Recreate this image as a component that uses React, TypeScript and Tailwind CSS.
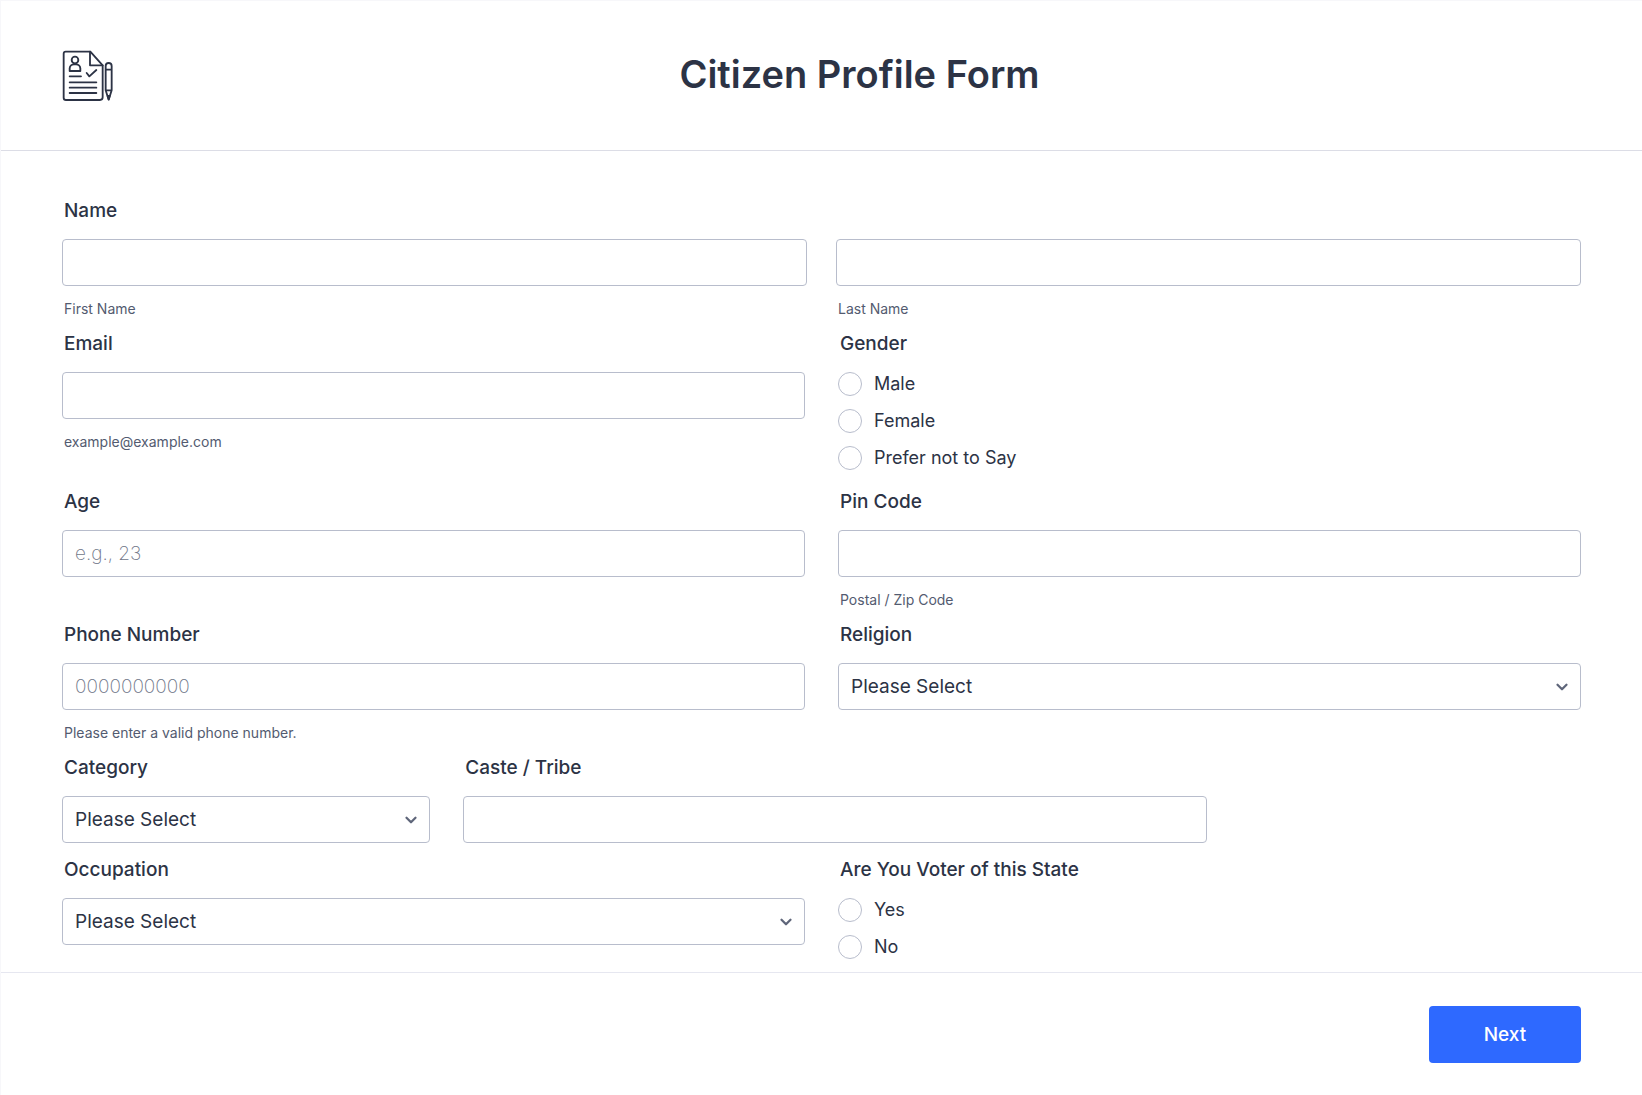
import type { ReactNode } from "react";
import { ChevronDown } from "lucide-react";

const CONTROL =
  "block w-full h-[47px] px-3 rounded border border-[#b8bdcc] bg-white text-[19px] text-[#2c3345] placeholder:font-extralight placeholder:text-[#6f7688] focus:outline-none focus:border-[#2e69ff]";

const LABEL = "block px-0.5 mb-4 text-[19px] leading-6 font-medium";

const NO_OPTIONS: string[] = [];

function FormIcon() {
  return (
    <svg
      viewBox="66 60 156 156"
      className="w-[52px] h-[52px] shrink-0"
      fill="none"
      stroke="#2c3345"
      strokeWidth="5.5"
      strokeLinecap="round"
      strokeLinejoin="round"
      aria-hidden="true"
    >
      <path d="M151 65H77a6 6 0 0 0-6 6v132a7 7 0 0 0 7 7h102a8 8 0 0 0 8-8V106z" />
      <path d="M150 65v41h38" />
      <circle cx="105" cy="90" r="10" />
      <path d="M89 123v-8a13 13 0 0 1 13-12h6a13 13 0 0 1 13 12v8z" />
      <path d="M140 129l8 10 21-19" />
      <path d="M89 139h34M89 157h80M89 173h80M89 189h80" />
      <path d="M197 181v-73a9 9 0 0 1 18 0v73l-9 28zM197 119h18M197 181h18" />
      <path d="M203 198h6l-3 10z" />
    </svg>
  );
}

function Label({ htmlFor, children }: { htmlFor: string; children: ReactNode }) {
  return <label htmlFor={htmlFor} className={LABEL}>{children}</label>;
}

function TextInput({ id, type = "text", placeholder }: { id: string; type?: string; placeholder?: string }) {
  return <input id={id} name={id} type={type} placeholder={placeholder} className={CONTROL} />;
}

function Hint({ htmlFor, children }: { htmlFor: string; children: ReactNode }) {
  return (
    <label htmlFor={htmlFor} className="block mt-3.5 px-0.5 text-[14px] leading-[17px] text-[#535b70]">
      {children}
    </label>
  );
}

function Select({ id, options = NO_OPTIONS }: { id: string; options?: string[] }) {
  return (
    <div className="relative">
      <select id={id} name={id} className={`${CONTROL} appearance-none pt-0.5 pr-10`}>
        <option value="">Please Select</option>
        {options.map(o => <option key={o}>{o}</option>)}
      </select>
      <ChevronDown
        size={18}
        strokeWidth={3}
        className="absolute right-2.5 inset-y-0 my-auto text-[#5f667a] pointer-events-none"
      />
    </div>
  );
}

function RadioGroup({ name, legend, options }: { name: string; legend: string; options: string[] }) {
  return (
    <fieldset>
      <legend className={LABEL}>{legend}</legend>
      <div className="flex flex-col gap-[13px] pb-[5px]">
        {options.map(o => (
          <label key={o} className="flex items-center gap-3 text-[18px] leading-6">
            <input
              type="radio"
              name={name}
              value={o}
              className="appearance-none size-6 shrink-0 rounded-full border border-[#b8bdcc] bg-white checked:border-[7px] checked:border-[#2e69ff]"
            />
            {o}
          </label>
        ))}
      </div>
    </fieldset>
  );
}

export default function App() {
  return (
    <form
      className="min-h-screen bg-white border-l border-t border-[#f7f7fa] text-[#2c3345]"
      style={{ fontFamily: "Inter, sans-serif" }}
      onSubmit={e => e.preventDefault()}
    >
      <header className="flex items-start gap-6 px-[61px] pt-[49px] pb-12 border-b border-[#dcdde6]">
        <FormIcon />
        <h1 className="flex-1 text-center text-[38px] leading-[48px] font-semibold">Citizen Profile Form</h1>
      </header>

      <main className="flex flex-col gap-[15px] px-[61px] pt-12 pb-2">
        <fieldset>
          <legend className={LABEL}>Name</legend>
          <div className="grid grid-cols-2 gap-[29px]">
            <div>
              <TextInput id="first-name" />
              <Hint htmlFor="first-name">First Name</Hint>
            </div>
            <div>
              <TextInput id="last-name" />
              <Hint htmlFor="last-name">Last Name</Hint>
            </div>
          </div>
        </fieldset>

        <div className="grid grid-cols-2 gap-[33px]">
          <div>
            <Label htmlFor="email">Email</Label>
            <TextInput id="email" type="email" />
            <Hint htmlFor="email">example@example.com</Hint>
          </div>
          <RadioGroup name="gender" legend="Gender" options={["Male", "Female", "Prefer not to Say"]} />
        </div>

        <div className="grid grid-cols-2 gap-[33px]">
          <div>
            <Label htmlFor="age">Age</Label>
            <TextInput id="age" placeholder="e.g., 23" />
          </div>
          <div>
            <Label htmlFor="pin-code">Pin Code</Label>
            <TextInput id="pin-code" />
            <Hint htmlFor="pin-code">Postal / Zip Code</Hint>
          </div>
        </div>

        <div className="grid grid-cols-2 gap-[33px]">
          <div>
            <Label htmlFor="phone">Phone Number</Label>
            <TextInput id="phone" type="tel" placeholder="0000000000" />
            <Hint htmlFor="phone">Please enter a valid phone number.</Hint>
          </div>
          <div>
            <Label htmlFor="religion">Religion</Label>
            <Select id="religion" />
          </div>
        </div>

        <div className="grid grid-cols-[368fr_743fr_341fr] gap-[33px]">
          <div>
            <Label htmlFor="category">Category</Label>
            <Select id="category" />
          </div>
          <div>
            <Label htmlFor="caste">Caste / Tribe</Label>
            <TextInput id="caste" />
          </div>
        </div>

        <div className="grid grid-cols-2 gap-[33px]">
          <div>
            <Label htmlFor="occupation">Occupation</Label>
            <Select id="occupation" />
          </div>
          <RadioGroup name="voter" legend="Are You Voter of this State" options={["Yes", "No"]} />
        </div>
      </main>

      <footer className="flex justify-end px-[61px] pt-[33px] pb-8 border-t border-[#e6e7f0]">
        <button
          type="submit"
          className="w-[152px] h-[57px] pt-0.5 rounded bg-[#2e69ff] text-white text-[19px] font-medium cursor-pointer"
        >
          Next
        </button>
      </footer>
    </form>
  );
}
